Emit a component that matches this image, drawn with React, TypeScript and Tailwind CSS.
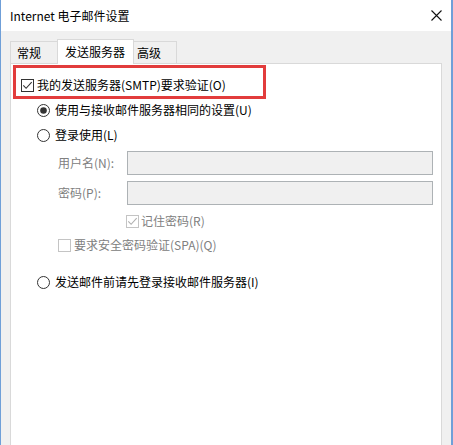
import React from "react";

function CheckBox({ checked, disabled }: { checked?: boolean; disabled?: boolean }) {
  const c = disabled ? "#b0b0b0" : "#333333";
  return (
    <svg width="13" height="13" viewBox="0 0 13 13" className="shrink-0">
      <rect x="0.5" y="0.5" width="12" height="12" fill="#ffffff" stroke={disabled ? "#c4c4c4" : "#333333"} />
      {checked && (
        <path d="M2.3 6.4 L5.1 9.3 L10.7 3.2" fill="none" stroke={c} strokeWidth="1.1" />
      )}
    </svg>
  );
}

function Radio({ checked }: { checked?: boolean }) {
  return (
    <svg width="13" height="13" viewBox="0 0 13 13" className="shrink-0">
      <circle cx="6.5" cy="6.5" r="6" fill="#ffffff" stroke="#333333" />
      {checked && <circle cx="6.5" cy="6.5" r="3.3" fill="#333333" />}
    </svg>
  );
}

export default function App() {
  return (
    <div className="relative w-[453px] h-[445px] overflow-hidden bg-[#f0f0f0] border-l border-r-2 border-[#6f9fd8] font-['Noto_Sans_CJK_SC','Microsoft_YaHei',sans-serif] text-[12px] leading-none text-black">
      {/* title bar */}
      <div className="h-[31px] bg-white flex items-center justify-between pl-[9px] pr-[9px]">
        <span className="pt-[1px]">Internet 电子邮件设置</span>
        <svg width="11" height="11" viewBox="0 0 11 11">
          <path d="M0.5 0.5 L10.5 10.5 M10.5 0.5 L0.5 10.5" stroke="#111" strokeWidth="1.1" />
        </svg>
      </div>

      {/* body */}
      <div className="pl-[9px] pr-[8px]">
        {/* tabs */}
        <div className="flex items-end h-[32px] pt-[8px]">
          <div className="w-[47px] h-[22px] border border-r-0 border-b-0 border-[#d9d9d9] bg-[#f0f0f0] flex items-center pl-[6px] pt-[1px]">
            常规
          </div>
          <div className="relative z-10 w-[77px] h-[25px] mb-[-1px] border border-b-0 border-[#d9d9d9] bg-white flex items-center pl-[7px]">
            发送服务器
          </div>
          <div className="w-[43px] h-[22px] border border-l-0 border-b-0 border-[#d9d9d9] bg-[#f0f0f0] flex items-center pl-[3px] pt-[1px]">
            高级
          </div>
        </div>

        {/* panel */}
        <div className="w-[432px] h-[400px] bg-white border border-[#d9d9d9] flex flex-col">
          <div className="mt-[9px] h-[24px] flex items-center pl-[10px] gap-[3px]">
            <CheckBox checked />
            <span>我的发送服务器(SMTP)要求验证(O)</span>
          </div>
          <div className="mt-[3px] h-[20px] flex items-center pl-[26px] gap-[5px]">
            <Radio checked />
            <span>使用与接收邮件服务器相同的设置(U)</span>
          </div>
          <div className="mt-[5px] h-[20px] flex items-center pl-[26px] gap-[5px]">
            <Radio />
            <span>登录使用(L)</span>
          </div>
          <div className="mt-[6px] h-[24px] flex items-center pl-[47px]">
            <span className="w-[69px] text-[#808080]">用户名(N):</span>
            <div className="w-[306px] h-[24px] bg-[#f0f0f0] border border-[#adb2b5]" />
          </div>
          <div className="mt-[6px] h-[24px] flex items-center pl-[47px]">
            <span className="w-[69px] text-[#808080]">密码(P):</span>
            <div className="w-[306px] h-[24px] bg-[#f0f0f0] border border-[#adb2b5]" />
          </div>
          <div className="mt-[6px] h-[20px] flex items-center pl-[115px] gap-[2px]">
            <CheckBox checked disabled />
            <span className="text-[#808080]">记住密码(R)</span>
          </div>
          <div className="mt-[4px] h-[20px] flex items-center pl-[47px] gap-[3px]">
            <CheckBox disabled />
            <span className="text-[#808080]">要求安全密码验证(SPA)(Q)</span>
          </div>
          <div className="mt-[17px] h-[20px] flex items-center pl-[26px] gap-[5px]">
            <Radio />
            <span>发送邮件前请先登录接收邮件服务器(I)</span>
          </div>
        </div>
      </div>

      {/* red annotation box */}
      <div className="absolute left-[12px] top-[65px] w-[253px] h-[34px] border-[3px] border-[#e23c3c]" />
    </div>
  );
}
